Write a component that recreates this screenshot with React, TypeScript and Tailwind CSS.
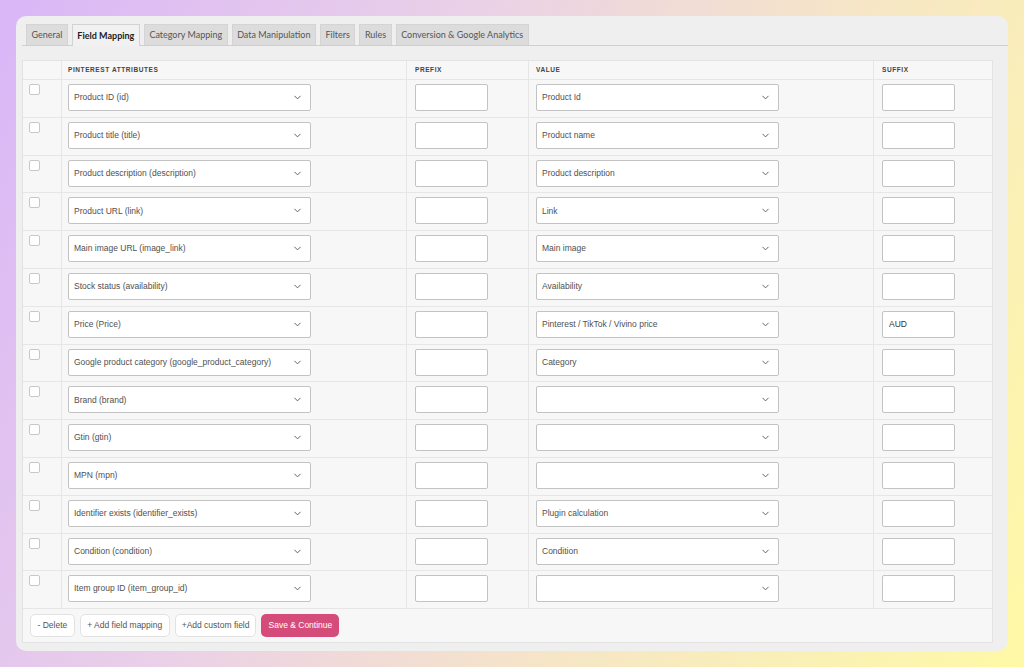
import { ChevronDown } from 'lucide-react';

const tabs = [
  'General',
  'Field Mapping',
  'Category Mapping',
  'Data Manipulation',
  'Filters',
  'Rules',
  'Conversion & Google Analytics',
];

const mappings = [
  { attr: 'Product ID (id)', value: 'Product Id', suffix: '' },
  { attr: 'Product title (title)', value: 'Product name', suffix: '' },
  { attr: 'Product description (description)', value: 'Product description', suffix: '' },
  { attr: 'Product URL (link)', value: 'Link', suffix: '' },
  { attr: 'Main image URL (image_link)', value: 'Main image', suffix: '' },
  { attr: 'Stock status (availability)', value: 'Availability', suffix: '' },
  { attr: 'Price (Price)', value: 'Pinterest / TikTok / Vivino price', suffix: 'AUD' },
  { attr: 'Google product category (google_product_category)', value: 'Category', suffix: '' },
  { attr: 'Brand (brand)', value: '', suffix: '' },
  { attr: 'Gtin (gtin)', value: '', suffix: '' },
  { attr: 'MPN (mpn)', value: '', suffix: '' },
  { attr: 'Identifier exists (identifier_exists)', value: 'Plugin calculation', suffix: '' },
  { attr: 'Condition (condition)', value: 'Condition', suffix: '' },
  { attr: 'Item group ID (item_group_id)', value: '', suffix: '' },
];

function FakeSelect({ label }: { label: string }) {
  return (
    <div className="flex h-[27px] w-[243px] items-center justify-between rounded-[2px] border border-[#c3c3c3] bg-white pl-[5px] pr-[7px] text-[8.5px] text-[#505050]">
      <span>{label}</span>
      <ChevronDown className="h-[11px] w-[11px] text-[#555]" strokeWidth={2} />
    </div>
  );
}

function TextBox({ value }: { value: string }) {
  return (
    <div className="flex h-[27px] w-[73px] items-center rounded-[2px] border border-[#c3c3c3] bg-white px-[6px] text-[8.5px] text-[#333]">
      {value}
    </div>
  );
}

const grid = 'grid grid-cols-[38px_345px_122px_345px_1fr]';
const cell = 'border-l border-[#e6e6e6]';

export default function App() {
  return (
    <div className="flex h-[667px] w-[1024px] bg-[linear-gradient(115deg,#d9b6f7_0%,#ead0e8_35%,#f6e6c6_65%,#fff9a6_100%)] p-[16px] font-['Liberation_Sans',Arial,sans-serif]">
      <div className="flex w-full flex-col rounded-[10px] bg-[#efefef] pb-[8px] pl-[6px] pr-[15px] pt-[8px]">
        {/* tab strip */}
        <div className="-mr-[15px] flex gap-[4px] border-b border-[#cfcfcf] pl-[4px] font-['Lato',sans-serif]">
          {tabs.map((t, i) =>
            i === 1 ? (
              <div
                key={t}
                className="-mb-px flex h-[22px] items-center border border-b-0 border-[#d2d2d2] bg-[#f1f1f1] px-[4.5px] text-[9px] font-bold text-[#222]"
              >
                {t}
              </div>
            ) : (
              <div
                key={t}
                className="flex h-[21px] items-center border border-b-0 border-[#d4d4d4] bg-[#dcdcdc] px-[4.5px] text-[9px] text-[#555]"
              >
                {t}
              </div>
            ),
          )}
        </div>

        {/* mapping table */}
        <div className="mt-[14px] border border-[#e3e3e3] bg-[#f7f7f7]">
          <div className={`${grid} h-[19px] items-center border-b border-[#e6e6e6] text-[6.5px] font-bold tracking-[0.09em] text-[#444]`}>
            <div />
            <div className={`${cell} flex h-full items-center pl-[6px]`}>PINTEREST ATTRIBUTES</div>
            <div className={`${cell} flex h-full items-center pl-[8px]`}>PREFIX</div>
            <div className={`${cell} flex h-full items-center pl-[7px]`}>VALUE</div>
            <div className={`${cell} flex h-full items-center pl-[8px]`}>SUFFIX</div>
          </div>

          {mappings.map((m) => (
            <div key={m.attr} className={`${grid} h-[37.8px] border-b border-[#e6e6e6]`}>
              <div className="pl-[6px] pt-[4px]">
                <div className="h-[11px] w-[11px] rounded-[2px] border border-[#c8c8c8] bg-white" />
              </div>
              <div className={`${cell} pl-[6px] pt-[4px]`}>
                <FakeSelect label={m.attr} />
              </div>
              <div className={`${cell} pl-[8px] pt-[4px]`}>
                <TextBox value="" />
              </div>
              <div className={`${cell} pl-[7px] pt-[4px]`}>
                <FakeSelect label={m.value} />
              </div>
              <div className={`${cell} pl-[8px] pt-[4px]`}>
                <TextBox value={m.suffix} />
              </div>
            </div>
          ))}

          <div className="flex h-[33px] items-center gap-[5px] pl-[7px] text-[8.5px] text-[#555]">
            <button className="h-[23px] rounded-[5px] border border-[#e2e2e2] bg-white px-[6.5px]">- Delete</button>
            <button className="h-[23px] rounded-[5px] border border-[#e2e2e2] bg-white px-[6.5px]">+ Add field mapping</button>
            <button className="h-[23px] rounded-[5px] border border-[#e2e2e2] bg-white px-[6px]">+Add custom field</button>
            <button className="h-[23px] rounded-[5px] bg-[#d54c7b] px-[7px] text-white">Save &amp; Continue</button>
          </div>
        </div>
      </div>
    </div>
  );
}
